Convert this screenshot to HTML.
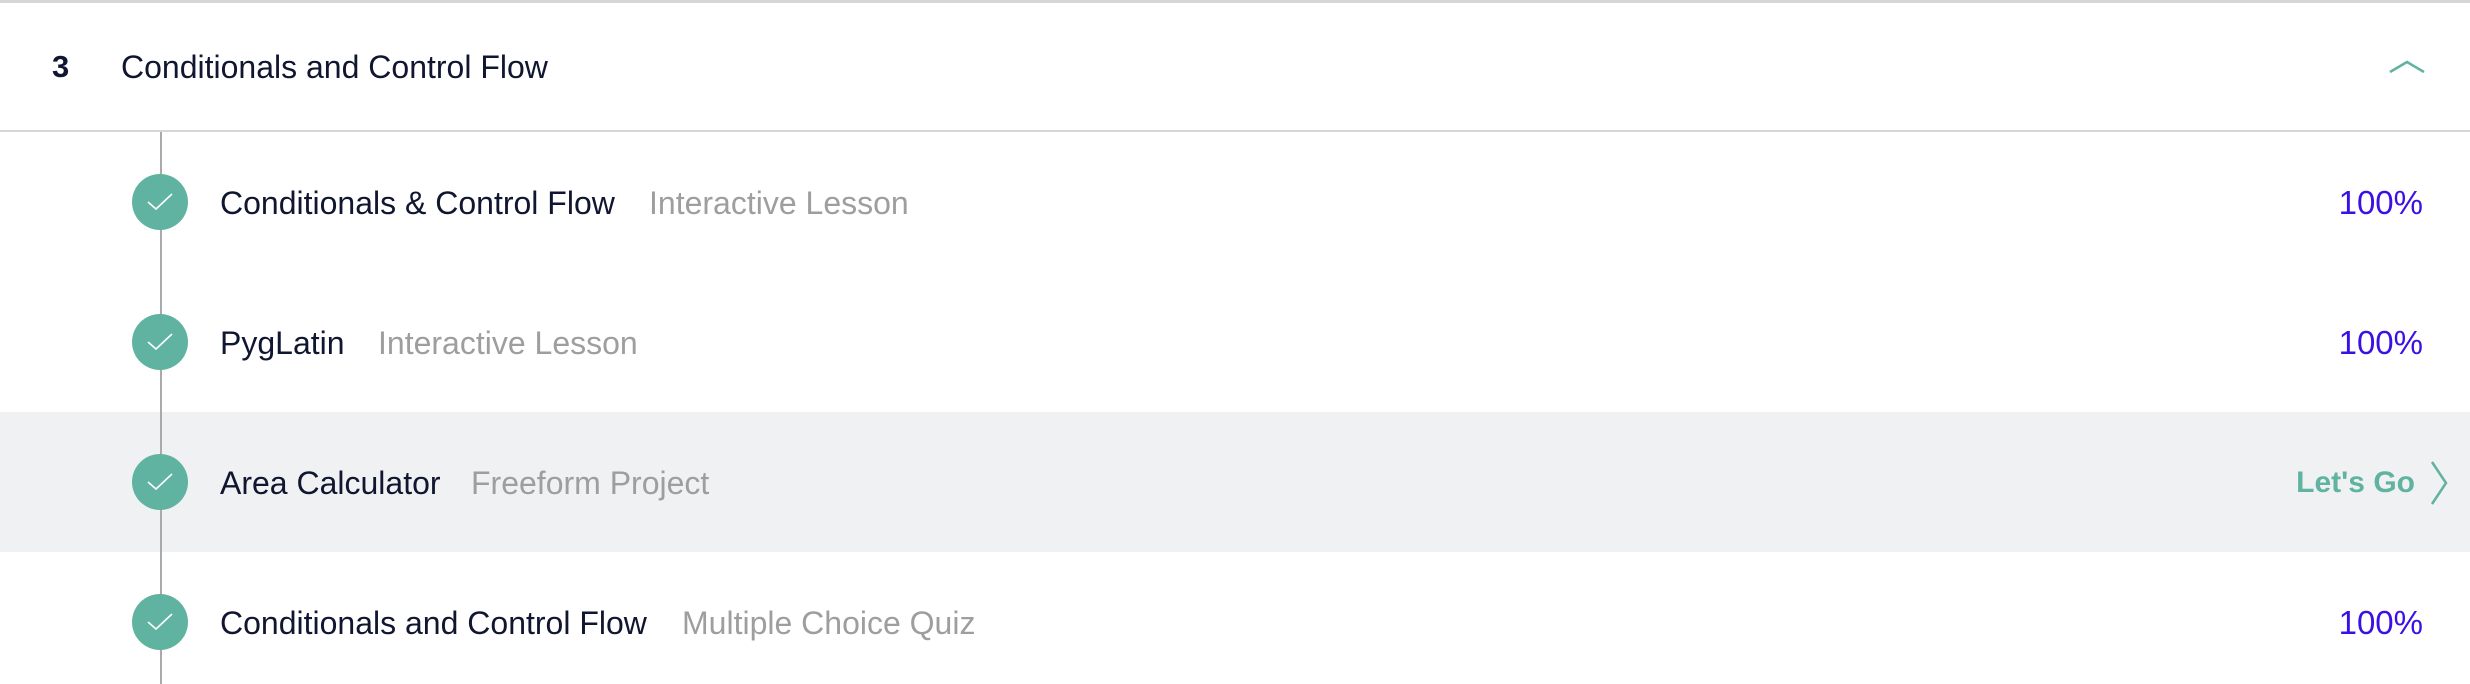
<!DOCTYPE html>
<html><head><meta charset="utf-8"><style>
body{margin:0;width:2470px;height:684px;background:#fff;position:relative;overflow:hidden;font-family:"Liberation Sans",sans-serif;}
.a{position:absolute;white-space:nowrap;line-height:40px;}
.t{font-size:32px;color:#10162f;}
.g{font-size:32px;color:#9e9e9e;}
.p{font-size:33px;color:#3a10e5;right:47px;}
</style></head><body>
<div class="a" style="left:0;top:0;width:2470px;height:3px;background:#d6d6d6"></div>
<div class="a" style="left:52px;top:47px;font-size:31px;font-weight:bold;color:#10162f">3</div>
<div class="a" style="left:121px;top:47px;font-size:32px;color:#10162f">Conditionals and Control Flow</div>
<svg class="a" style="left:2388px;top:57px" width="38" height="20"><path d="M2 15 L19 5 L36 15" fill="none" stroke="#5fb3a0" stroke-width="2.5"/></svg>
<div class="a" style="left:0;top:130px;width:2470px;height:2px;background:#d6d6d6"></div>
<div class="a" style="left:0;top:412px;width:2470px;height:140px;background:#f0f1f2"></div>
<div class="a" style="left:160px;top:132px;width:2px;height:552px;background:#aaa"></div>
<svg class="a" style="left:0;top:0" width="300" height="684">
<g fill="#5fb3a0"><circle cx="160" cy="202" r="28"/><circle cx="160" cy="342" r="28"/><circle cx="160" cy="482" r="28"/><circle cx="160" cy="622" r="28"/></g>
<g fill="none" stroke="#fff" stroke-width="1.6">
<path d="M148 202 L156 209 L172 194"/><path d="M148 342 L156 349 L172 334"/><path d="M148 482 L156 489 L172 474"/><path d="M148 622 L156 629 L172 614"/></g></svg>
<div class="a t" style="left:220px;top:183px">Conditionals &amp; Control Flow</div>
<div class="a g" style="left:649px;top:183px">Interactive Lesson</div>
<div class="a p" style="top:183px">100%</div>
<div class="a t" style="left:220px;top:323px">PygLatin</div>
<div class="a g" style="left:378px;top:323px">Interactive Lesson</div>
<div class="a p" style="top:323px">100%</div>
<div class="a t" style="left:220px;top:463px">Area Calculator</div>
<div class="a g" style="left:471px;top:463px">Freeform Project</div>
<div class="a" style="right:55px;top:463px;font-size:30px;font-weight:bold;color:#5fb3a0">Let's Go</div>
<svg class="a" style="left:2428px;top:460px" width="24" height="46"><path d="M4 2 L18 23 L4 44" fill="none" stroke="#5fb3a0" stroke-width="2.5"/></svg>
<div class="a t" style="left:220px;top:603px">Conditionals and Control Flow</div>
<div class="a g" style="left:682px;top:603px">Multiple Choice Quiz</div>
<div class="a p" style="top:603px">100%</div>
</body></html>
